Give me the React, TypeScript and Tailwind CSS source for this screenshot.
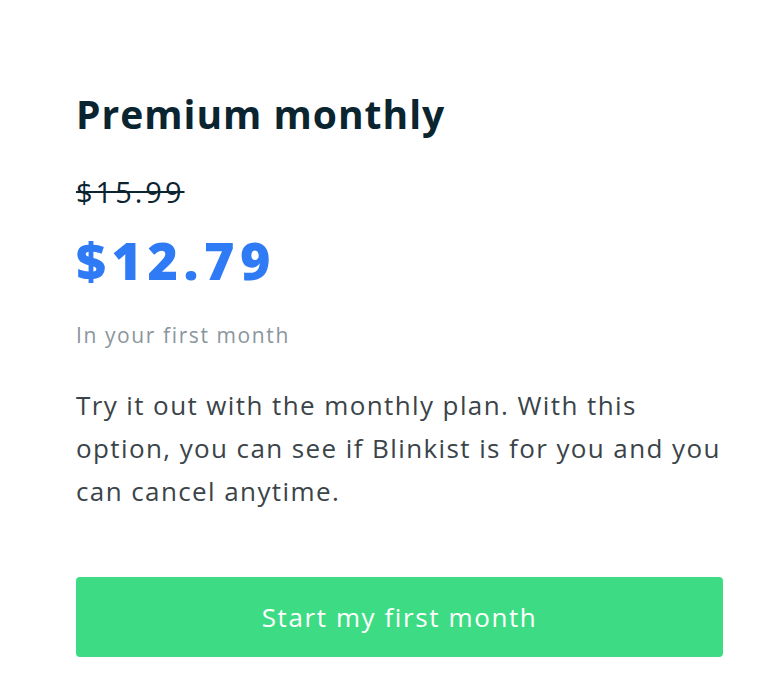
export default function App() {
  return (
    <div className="w-[768px] h-[689px] bg-white overflow-hidden" style={{ fontFamily: "'Open Sans', sans-serif" }}>
      <div className="pl-[76px] pr-[20px] pt-[90px]">
        <h1 className="text-[39px] leading-[48px] font-bold text-[#0a2430] tracking-[1px]">Premium monthly</h1>
        <div className="mt-[36px] text-[29px] leading-[36px] text-[#0a2430] line-through tracking-[3px]">$15.99</div>
        <div className="mt-[20px] text-[52px] leading-[60px] font-extrabold text-[#2f7af5] tracking-[5.5px]">$12.79</div>
        <div className="mt-[31px] text-[21px] leading-[28px] text-[#8a969c] tracking-[1.6px]">In your first month</div>
        <p className="mt-[35px] text-[26px] leading-[43px] text-[#3a4449] tracking-[1.4px] whitespace-nowrap">
          Try it out with the monthly plan. With this
          <br />
          option, you can see if Blinkist is for you and you
          <br />
          can cancel anytime.
        </p>
        <button className="mt-[64px] w-[647px] h-[80px] rounded-[4px] bg-[#3ddc84] text-white text-[26px] tracking-[1.6px] flex items-center justify-center">
          Start my first month
        </button>
      </div>
    </div>
  );
}
